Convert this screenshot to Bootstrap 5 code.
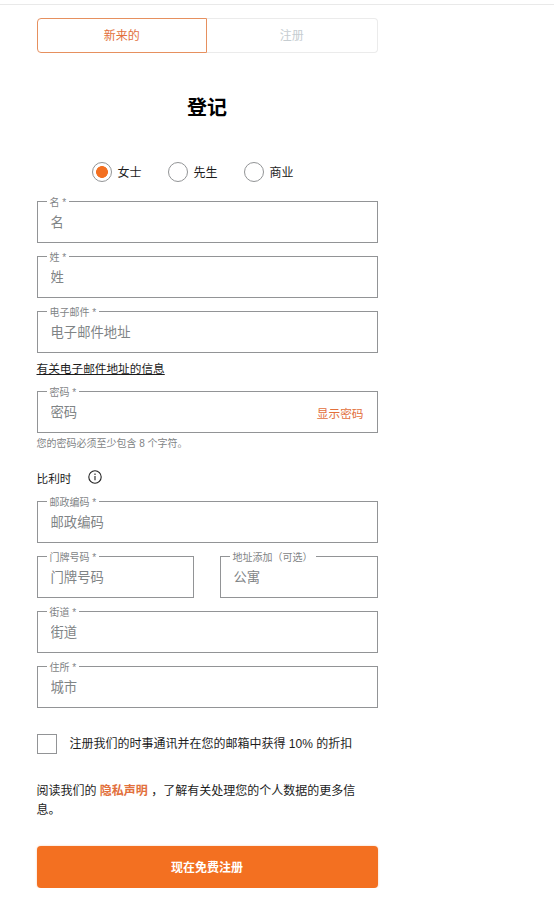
<!DOCTYPE html>
<html lang="zh-CN">
<head>
<meta charset="utf-8">
<meta name="viewport" content="width=device-width, initial-scale=1">
<title>登记</title>
<link href="https://cdn.jsdelivr.net/npm/bootstrap@5.3.0/dist/css/bootstrap.min.css" rel="stylesheet">
<style>
  :root { --brand: #f37021; --brand-text: #e2703c; --line: #929496; --muted-ink: #7f8486; }
  body { font-family: "Liberation Sans", "Noto Sans CJK SC", sans-serif; font-size: 12px; line-height: 20px; color: #1c1c1c; background: #fff; }
  .top-rule { height: 5px; border-bottom: 1px solid #e9e9e9; }
  .signup { width: 341px; margin: 13px 0 0 36.5px; }
  .switch-tab { height: 35px; font-size: 12px; line-height: 33px; padding: 1px 0 0; border: 1px solid #ebebeb; background: #fff; color: #c6cdd1; }
  .switch-tab.start { border-color: #e6905f; color: var(--brand-text); border-radius: 4px 0 0 4px; }
  .switch-tab.end { border-left: 0; border-radius: 0 4px 4px 0; }
  .signup h1 { font-size: 20px; line-height: 24px; font-weight: 700; color: #000; margin: 43px 0 0; }
  .titles { margin: 42px 0 19px 55px; gap: 26px; }
  .titles .form-check-input { width: 20px; height: 20px; border: 1px solid var(--line); }
  .titles .form-check-input:checked { background: radial-gradient(circle, var(--brand) 0 5.6px, #fff 6.2px); }
  .titles label { margin-left: 6px; width: 24px; height: 20px; padding-top: 1px; line-height: 20px; white-space: nowrap; }
  .fields { display: flex; flex-direction: column; gap: 13px; }
  .outlined { position: relative; }
  .outlined .form-control { height: 42px; border: 1px solid var(--line); border-radius: 0; padding: 0 13px; font-size: 13.33px; box-shadow: none; background: #fff; }
  .outlined .form-control::placeholder { color: var(--muted-ink); opacity: 1; }
  .outlined > label { position: absolute; top: -4px; left: 10px; padding: 0 3px; line-height: 12px; font-size: 10px; color: var(--muted-ink); background: #fff; white-space: nowrap; }
  .reveal { position: absolute; right: 14px; top: 13px; font-size: 11.67px; color: var(--brand-text); text-decoration: none; }
  .mail-row { margin: 7px 0 13px; }
  .mail-info { font-size: 11.67px; line-height: 18px; color: #1c1c1c; text-underline-offset: 1px; }
  .hint { font-size: 10px; line-height: 14px; color: var(--muted-ink); margin-top: 4px; }
  .country { font-size: 11.67px; margin: 18px 0 12px; gap: 17px; height: 20px; }
  .house-row { display: grid; grid-template-columns: 157px 158px; justify-content: space-between; }
  .newsletter { margin-top: 26px; gap: 13px; }
  .newsletter label { height: 20px; }
  .newsletter .form-check-input { width: 20px; height: 20px; border: 1px solid var(--line); border-radius: 0; }
  .privacy { margin: 28px 0 0; line-height: 19px; }
  .privacy a { color: var(--brand-text); font-weight: 700; text-decoration: none; }
  .submit { height: 42px; margin-top: 26px; font-size: 12px; font-weight: 700; border: 0; border-radius: 4px; background: var(--brand); color: #fff; padding: 1px 0 0; box-shadow: 0 0 2px rgba(243,112,33,.4); }
</style>
</head>
<body>
<div class="top-rule"></div>
<form class="signup">
  <div class="d-flex">
    <button type="button" class="switch-tab start w-50">新来的</button>
    <button type="button" class="switch-tab end w-50">注册</button>
  </div>
  <h1 class="text-center">登记</h1>
  <div class="titles d-flex">
    <div class="d-flex align-items-center"><input class="form-check-input m-0" type="radio" name="t" id="t1" checked><label for="t1">女士</label></div>
    <div class="d-flex align-items-center"><input class="form-check-input m-0" type="radio" name="t" id="t2"><label for="t2">先生</label></div>
    <div class="d-flex align-items-center"><input class="form-check-input m-0" type="radio" name="t" id="t3"><label for="t3">商业</label></div>
  </div>
  <div class="fields">
    <div class="outlined"><input class="form-control" id="first" placeholder="名"><label for="first">名 *</label></div>
    <div class="outlined"><input class="form-control" id="last" placeholder="姓"><label for="last">姓 *</label></div>
    <div class="outlined"><input class="form-control" id="mail" placeholder="电子邮件地址"><label for="mail">电子邮件 *</label></div>
  </div>
  <div class="mail-row d-flex"><a class="mail-info" href="#">有关电子邮件地址的信息</a></div>
  <div class="outlined"><input class="form-control" type="password" id="pw" placeholder="密码"><label for="pw">密码 *</label><a class="reveal" href="#">显示密码</a></div>
  <div class="hint">您的密码必须至少包含 8 个字符。</div>
  <div class="country d-flex align-items-center">
    <span>比利时</span>
    <svg width="14" height="14" viewBox="0 0 14 14" class="mb-1" fill="none" stroke="#222" stroke-width="1.1" aria-hidden="true"><circle cx="7" cy="7" r="6.2"/><path d="M7 6v4.2M7 3.6v1.3"/></svg>
  </div>
  <div class="fields">
    <div class="outlined"><input class="form-control" id="zip" placeholder="邮政编码"><label for="zip">邮政编码 *</label></div>
    <div class="house-row">
      <div class="outlined"><input class="form-control" id="house" placeholder="门牌号码"><label for="house">门牌号码 *</label></div>
      <div class="outlined"><input class="form-control" id="extra" placeholder="公寓"><label for="extra">地址添加（可选）</label></div>
    </div>
    <div class="outlined"><input class="form-control" id="street" placeholder="街道"><label for="street">街道 *</label></div>
    <div class="outlined"><input class="form-control" id="city" placeholder="城市"><label for="city">住所 *</label></div>
  </div>
  <div class="newsletter d-flex align-items-center">
    <input class="form-check-input m-0" type="checkbox" id="news"><label for="news">注册我们的时事通讯并在您的邮箱中获得 10% 的折扣</label>
  </div>
  <p class="privacy">阅读我们的 <a href="#">隐私声明</a> ，了解有关处理您的个人数据的更多信息。</p>
  <button type="button" class="submit btn w-100">现在免费注册</button>
</form>
<script src="https://cdn.jsdelivr.net/npm/bootstrap@5.3.0/dist/js/bootstrap.bundle.min.js"></script>
</body>
</html>
